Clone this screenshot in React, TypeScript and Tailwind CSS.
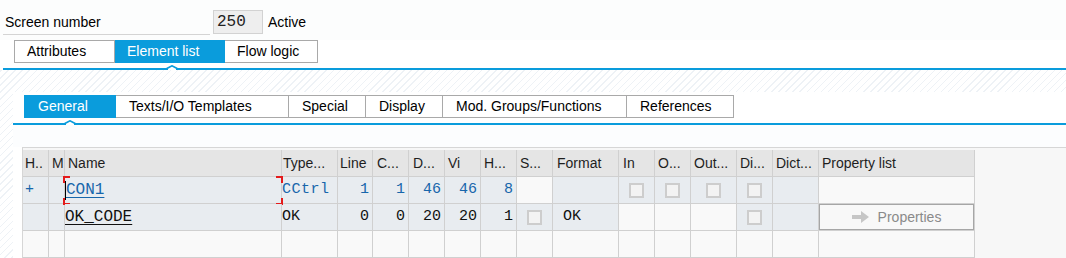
import React from "react"

type Cell = {
  kind: "empty" | "text" | "num" | "check" | "name" | "button"
  value?: string
  ro?: boolean
  blue?: boolean
  pl?: string
}

const headers: { label: string; pl: string }[] = [
  { label: "H..", pl: "pl-[2px]" },
  { label: "M", pl: "pl-[3px]" },
  { label: "Name", pl: "pl-[3px]" },
  { label: "Type...", pl: "pl-[1px]" },
  { label: "Line", pl: "pl-[2px]" },
  { label: "C...", pl: "pl-[4px]" },
  { label: "D...", pl: "pl-[4px]" },
  { label: "Vi", pl: "pl-[3px]" },
  { label: "H...", pl: "pl-[3px]" },
  { label: "S...", pl: "pl-[3px]" },
  { label: "Format", pl: "pl-[4px]" },
  { label: "In", pl: "pl-[4px]" },
  { label: "O...", pl: "pl-[3px]" },
  { label: "Out...", pl: "pl-[3px]" },
  { label: "Di...", pl: "pl-[3px]" },
  { label: "Dict...", pl: "pl-[3px]" },
  { label: "Property list", pl: "pl-[3px]" },
]

const rows: Cell[][] = [
  [
    { kind: "text", value: "+", blue: true, pl: "pl-[2px]" },
    { kind: "empty" },
    { kind: "name", value: "CON1", blue: true },
    { kind: "text", value: "CCtrl", blue: true, pl: "pl-[0px] tracking-[0.5px]" },
    { kind: "num", value: "1", blue: true },
    { kind: "num", value: "1", blue: true },
    { kind: "num", value: "46", blue: true },
    { kind: "num", value: "46", blue: true },
    { kind: "num", value: "8", blue: true },
    { kind: "empty", ro: true },
    { kind: "empty" },
    { kind: "check" },
    { kind: "check" },
    { kind: "check" },
    { kind: "check" },
    { kind: "empty" },
    { kind: "empty", ro: true },
  ],
  [
    { kind: "empty" },
    { kind: "empty" },
    { kind: "name", value: "OK_CODE" },
    { kind: "text", value: "OK", pl: "pl-[0px]" },
    { kind: "num", value: "0" },
    { kind: "num", value: "0" },
    { kind: "num", value: "20" },
    { kind: "num", value: "20" },
    { kind: "num", value: "1" },
    { kind: "check" },
    { kind: "text", value: "OK", pl: "pl-[10px]" },
    { kind: "empty", ro: true },
    { kind: "empty", ro: true },
    { kind: "empty", ro: true },
    { kind: "check" },
    { kind: "empty" },
    { kind: "button" },
  ],
  Array.from({ length: 17 }, () => ({ kind: "empty", ro: true }) as Cell),
]

function Caret({ left }: { left: number }) {
  // little notch on the blue line under the active tab
  return (
    <svg
      className="absolute top-[-3px]"
      style={{ left: left - 6 }}
      width="12"
      height="6"
      viewBox="0 0 12 6"
    >
      <rect x="2" y="3" width="8" height="2" fill="#ffffff" />
      <path d="M0 4 L6 0.8 L12 4" fill="#ffffff" stroke="#0a9cdc" strokeWidth="1.6" />
    </svg>
  )
}

function Tabs({
  tabs,
  active,
  pl,
}: {
  tabs: { label: string; w: string }[]
  active: number
  pl: string
}) {
  return (
    <div className="flex h-[23px]">
      {tabs.map((t, i) => (
        <div
          key={t.label}
          className={`${t.w} h-full flex items-center ${pl} border-y border-r ${
            i === 0 ? "border-l" : ""
          } ${
            i === active
              ? "bg-[#0a9cdc] border-[#0a9cdc] text-white"
              : "bg-white border-[#a9a9a9] text-black"
          }`}
        >
          {t.label}
        </div>
      ))}
    </div>
  )
}

function Checkbox() {
  return <div className="w-[15px] h-[15px] border-2 border-[#cdcdcd] bg-[#f3f3f3]" />
}

function DataCell({ cell }: { cell: Cell }) {
  const bg = cell.ro ? "bg-[#f9f9f9]" : "bg-[#e8ecf0]"
  const base = `h-full border-r border-b border-[#d0d0d0] ${bg} overflow-hidden`
  const color = cell.blue ? "text-[#1766ab]" : "text-[#111]"
  const mono = "font-['Liberation_Mono',monospace] text-[15px]"

  if (cell.kind === "check")
    return (
      <div className={`${base} flex items-center justify-center`}>
        <Checkbox />
      </div>
    )
  if (cell.kind === "num")
    return (
      <div className={`${base} flex items-center justify-end pr-[3px] ${mono} ${color}`}>
        {cell.value}
      </div>
    )
  if (cell.kind === "text")
    return (
      <div className={`${base} flex items-center ${cell.pl} ${mono} ${color}`}>
        {cell.value}
      </div>
    )
  if (cell.kind === "name")
    return (
      <div className={`${base} relative flex items-center overflow-visible`}>
        {cell.blue && (
          <>
            <div className="w-px h-[19px] bg-black" />
            <span className="absolute left-[-2px] top-[-1px] w-[7px] h-[2px] bg-[#e41b1b]" />
            <span className="absolute left-[-2px] top-[-1px] w-[2px] h-[7px] bg-[#e41b1b]" />
            <span className="absolute left-[-2px] bottom-[-2px] w-[7px] h-[2px] bg-[#e41b1b]" />
            <span className="absolute left-[-2px] bottom-[-2px] w-[2px] h-[7px] bg-[#e41b1b]" />
            <span className="absolute right-[-2px] top-[-1px] w-[7px] h-[2px] bg-[#e41b1b]" />
            <span className="absolute right-[-2px] top-[-1px] w-[2px] h-[7px] bg-[#e41b1b]" />
            <span className="absolute right-[-2px] bottom-[-2px] w-[7px] h-[2px] bg-[#e41b1b]" />
            <span className="absolute right-[-2px] bottom-[-2px] w-[2px] h-[7px] bg-[#e41b1b]" />
          </>
        )}
        <span
          className={`font-['Liberation_Mono',monospace] text-[16px] underline underline-offset-[3px] ${
            cell.blue ? "text-[#1766ab]" : "text-[#111]"
          }`}
        >
          {cell.value}
        </span>
      </div>
    )
  if (cell.kind === "button")
    return (
      <div className={`${base} bg-[#f9f9f9]`}>
        <div className="w-full h-full border border-[#a6a6a6] bg-[#f8f8f8] flex items-center justify-center gap-[8px] text-[#8a8a8a]">
          <svg width="18" height="12" viewBox="0 0 18 12">
            <path d="M0 4 H9 V0 L17 6 L9 12 V8 H0 Z" fill="#c6c6c6" />
          </svg>
          <span>Properties</span>
        </div>
      </div>
    )
  return <div className={base} />
}

export default function App() {
  const hatch =
    "bg-[repeating-linear-gradient(135deg,#eef2f6_0px,#eef2f6_1px,#ffffff_1px,#ffffff_5px)]"

  return (
    <div
      className={`w-[1066px] h-[258px] overflow-hidden ${hatch} font-['Liberation_Sans',Arial,sans-serif] text-[14px] text-black`}
    >
      {/* screen number row */}
      <div className="h-[40px] pt-[10px] flex bg-[#fcfdfd]">
        <div className="ml-[3px] w-[207px] h-[25px] border-b border-[#d4d4d4] flex items-center pl-[2px]">
          Screen number
        </div>
        <div className="ml-[3px] w-[50px] h-[24px] border border-[#d2d2d2] bg-[#eeeeee] flex items-center pl-[3px] font-['Liberation_Mono',monospace] text-[16px] text-[#222]">
          250
        </div>
        <div className="ml-[5px] h-[24px] flex items-center">Active</div>
      </div>

      {/* main tabs */}
      <div className="bg-white">
        <div className="pl-[14px]">
          <Tabs
            active={1}
            pl="pl-[12px]"
            tabs={[
              { label: "Attributes", w: "w-[101px]" },
              { label: "Element list", w: "w-[110px]" },
              { label: "Flow logic", w: "w-[93px]" },
            ]}
          />
        </div>
        <div className="h-[5px]" />
        <div className="ml-[3px] h-[2px] bg-[#0a9cdc] relative">
          <Caret left={169} />
        </div>
      </div>

      {/* striped band */}
      <div className="h-[22px]" />

      {/* element list panel */}
      <div className="flex h-[166px]">
        <div className="w-[13px] shrink-0" />
        <div className="flex-1 bg-white flex flex-col">
          <div className="pt-[3px] pl-[11px]">
            <Tabs
              active={0}
              pl="pl-[13px]"
              tabs={[
                { label: "General", w: "w-[92px]" },
                { label: "Texts/I/O Templates", w: "w-[173px]" },
                { label: "Special", w: "w-[77px]" },
                { label: "Display", w: "w-[77px]" },
                { label: "Mod. Groups/Functions", w: "w-[184px]" },
                { label: "References", w: "w-[107px]" },
              ]}
            />
          </div>
          <div className="h-[5px]" />
          <div className="h-[2px] bg-[#0a9cdc] relative">
            <Caret left={57} />
          </div>
          <div className="h-[22px] bg-[#fcfdfe]" />

          {/* table control */}
          <div className="ml-[9px] flex-1 border-t border-l border-[#d6d6d6] bg-[#f7f7f7] pt-[2px]">
            <div className="grid grid-cols-[26px_16px_217px_56px_35px_36px_36px_36px_36px_36px_66px_36px_36px_46px_36px_46px_156px] auto-rows-[27px] w-[952px]">
              {headers.map((h) => (
                <div
                  key={h.label}
                  className={`h-full border-r border-b border-[#d0d0d0] bg-[#e5e5e5] flex items-center ${h.pl} overflow-hidden whitespace-nowrap text-[#1e1e1e]`}
                >
                  {h.label}
                </div>
              ))}
              {rows.map((row, r) =>
                row.map((cell, c) => <DataCell key={`cell_${r}_${c}`} cell={cell} />)
              )}
            </div>
          </div>
        </div>
      </div>
    </div>
  )
}
